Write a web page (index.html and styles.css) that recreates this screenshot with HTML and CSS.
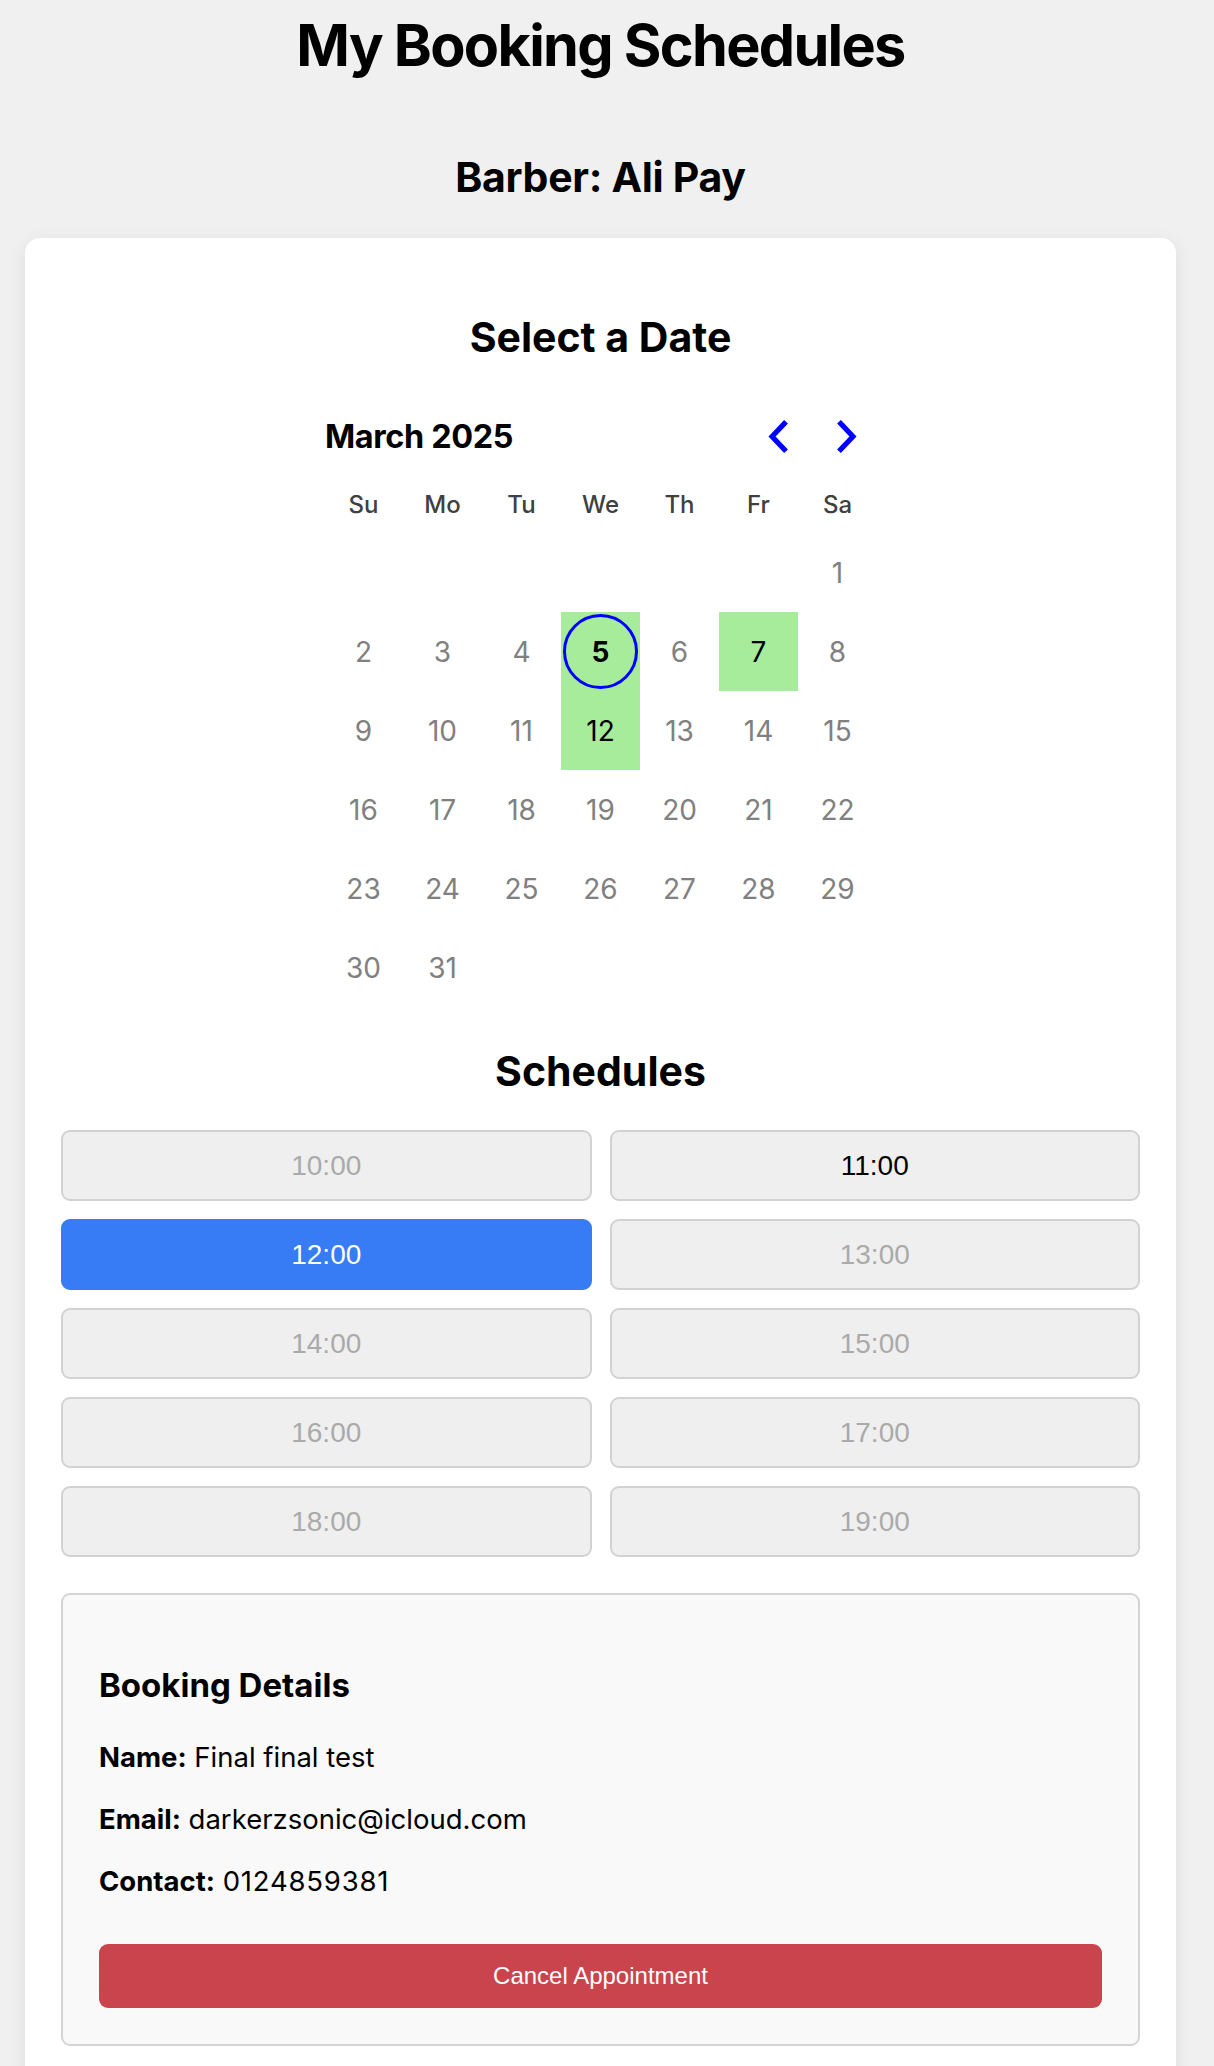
FILE: index.html
```html
<!DOCTYPE html>
<html lang="en">
<head>
<meta charset="utf-8">
<title>My Booking Schedules</title>
<link rel="stylesheet" href="styles.css">
</head>
<body>
<div class="page">
  <h1 class="title">My Booking Schedules</h1>
  <h2 class="barber">Barber: Ali Pay</h2>
  <div class="card">
    <h2 class="section-title date-title">Select a Date</h2>
    <div class="calendar">
      <div class="cal-caption">
        <span class="cal-month">March 2025</span>
        <div class="cal-nav">
          <button class="nav-btn" aria-label="Go to the Previous Month">
            <svg viewBox="0 0 24 24" aria-hidden="true"><polyline points="15.2 4.8 8.4 12 15.2 19.2"/></svg>
          </button>
          <button class="nav-btn" aria-label="Go to the Next Month">
            <svg viewBox="0 0 24 24" aria-hidden="true"><polyline points="8.8 4.8 15.6 12 8.8 19.2"/></svg>
          </button>
        </div>
      </div>
      <div class="cal-grid">
        <div class="weekday">Su</div>
        <div class="weekday">Mo</div>
        <div class="weekday">Tu</div>
        <div class="weekday">We</div>
        <div class="weekday">Th</div>
        <div class="weekday">Fr</div>
        <div class="weekday">Sa</div>

        <div class="day empty"></div>
        <div class="day empty"></div>
        <div class="day empty"></div>
        <div class="day empty"></div>
        <div class="day empty"></div>
        <div class="day empty"></div>
        <div class="day">1</div>

        <div class="day">2</div>
        <div class="day">3</div>
        <div class="day">4</div>
        <div class="day booked selected"><span class="day-btn">5</span></div>
        <div class="day">6</div>
        <div class="day booked">7</div>
        <div class="day">8</div>

        <div class="day">9</div>
        <div class="day">10</div>
        <div class="day">11</div>
        <div class="day booked">12</div>
        <div class="day">13</div>
        <div class="day">14</div>
        <div class="day">15</div>

        <div class="day">16</div>
        <div class="day">17</div>
        <div class="day">18</div>
        <div class="day">19</div>
        <div class="day">20</div>
        <div class="day">21</div>
        <div class="day">22</div>

        <div class="day">23</div>
        <div class="day">24</div>
        <div class="day">25</div>
        <div class="day">26</div>
        <div class="day">27</div>
        <div class="day">28</div>
        <div class="day">29</div>

        <div class="day">30</div>
        <div class="day">31</div>
        <div class="day empty"></div>
        <div class="day empty"></div>
        <div class="day empty"></div>
        <div class="day empty"></div>
        <div class="day empty"></div>
      </div>
    </div>

    <h2 class="section-title schedules-title">Schedules</h2>
    <div class="slots">
      <button class="slot" disabled>10:00</button>
      <button class="slot available">11:00</button>
      <button class="slot active">12:00</button>
      <button class="slot" disabled>13:00</button>
      <button class="slot" disabled>14:00</button>
      <button class="slot" disabled>15:00</button>
      <button class="slot" disabled>16:00</button>
      <button class="slot" disabled>17:00</button>
      <button class="slot" disabled>18:00</button>
      <button class="slot" disabled>19:00</button>
    </div>

    <div class="details">
      <h3 class="details-title">Booking Details</h3>
      <p class="detail-row"><strong>Name:</strong> Final final test</p>
      <p class="detail-row"><strong>Email:</strong> darkerzsonic@icloud.com</p>
      <p class="detail-row"><strong>Contact:</strong> <span class="phone">0124859381</span></p>
      <button class="cancel-btn">Cancel Appointment</button>
    </div>
  </div>
</div>
</body>
</html>
```

FILE: styles.css
```css
* {
  box-sizing: border-box;
}

html,
body {
  margin: 0;
  padding: 0;
}

body {
  background: #f0f0f0;
  font-family: Inter, "Noto Sans", sans-serif;
  color: #000;
}

.page {
  width: 1201px;
  padding-top: 10px;
}

.title {
  margin: 0;
  font-size: 57.6px;
  line-height: 70px;
  font-weight: 700;
  letter-spacing: -1.7px;
  text-align: center;
}

.barber {
  margin: 72px 0 0;
  font-size: 41px;
  line-height: 50px;
  font-weight: 700;
  letter-spacing: -0.3px;
  text-align: center;
}

.card {
  margin: 36px 25px 0;
  background: #fff;
  border-radius: 15px;
  box-shadow: 0 4px 18px rgba(0, 0, 0, 0.08);
  padding: 36px 36px 36px;
}

.section-title {
  margin: 0;
  font-size: 41px;
  line-height: 50px;
  font-weight: 700;
  text-align: center;
}

.date-title {
  margin-top: 38px;
}

/* Calendar */
.calendar {
  width: 553px;
  margin: 42px auto 0;
}

.cal-caption {
  display: flex;
  align-items: center;
  justify-content: space-between;
  height: 65px;
}

.cal-month {
  font-size: 32.4px;
  line-height: 40px;
  font-weight: 700;
  letter-spacing: -0.35px;
  padding-left: 1px;
}

.cal-nav {
  display: flex;
  margin-right: -3px;
}

.nav-btn {
  width: 68px;
  height: 65px;
  border: 0;
  padding: 0;
  background: none;
  display: flex;
  align-items: center;
  justify-content: center;
  color: #0000ff;
}

.nav-btn svg {
  width: 43px;
  height: 43px;
  fill: none;
  stroke: currentColor;
  stroke-width: 2.9;
  stroke-linecap: square;
  stroke-linejoin: miter;
}

.cal-grid {
  display: grid;
  grid-template-columns: repeat(7, 79px);
  margin-top: 7px;
}

.weekday {
  padding: 14px 0;
  font-size: 24px;
  line-height: 29px;
  font-weight: 500;
  color: #404040;
  text-align: center;
}

.day {
  height: 79px;
  display: flex;
  align-items: center;
  justify-content: center;
  font-size: 28px;
  color: #808080;
}

.day.booked {
  background: #a7ec9b;
  color: #000;
}

.day-btn {
  width: 75px;
  height: 75px;
  border: 3px solid #0000ff;
  border-radius: 50%;
  display: flex;
  align-items: center;
  justify-content: center;
  font-weight: 700;
  color: #000;
}

/* Schedules */
.schedules-title {
  margin-top: 39px;
}

.slots {
  display: grid;
  grid-template-columns: 1fr 1fr;
  gap: 18px;
  margin-top: 34px;
}

.slot {
  height: 71px;
  border: 2px solid #d2d2d2;
  border-radius: 9px;
  background: #efefef;
  font-family: "Liberation Sans", Arial, sans-serif;
  font-size: 28px;
  color: #aaaaaa;
  padding: 0;
}

.slot.available {
  color: #000;
}

.slot.active {
  background: #377bf5;
  border-color: #377bf5;
  color: #fff;
}

/* Booking details */
.details {
  margin-top: 36px;
  border: 2px solid #d4d4d4;
  border-radius: 9px;
  background: #f9f9f9;
  padding: 36px;
}

.details-title {
  margin: 34px 0 0;
  font-size: 33px;
  line-height: 40px;
  font-weight: 700;
}

.detail-row {
  margin: 30px 0 0;
  font-size: 27.5px;
  line-height: 32px;
}

.details-title + .detail-row {
  margin-top: 36px;
}

.detail-row strong {
  font-weight: 700;
}

.phone {
  letter-spacing: 0.8px;
}

.cancel-btn {
  display: block;
  width: 100%;
  height: 64px;
  margin-top: 47px;
  border: 0;
  border-radius: 9px;
  background: #c9444c;
  color: #fff;
  font-family: "Liberation Sans", Arial, sans-serif;
  font-size: 24px;
}
```
